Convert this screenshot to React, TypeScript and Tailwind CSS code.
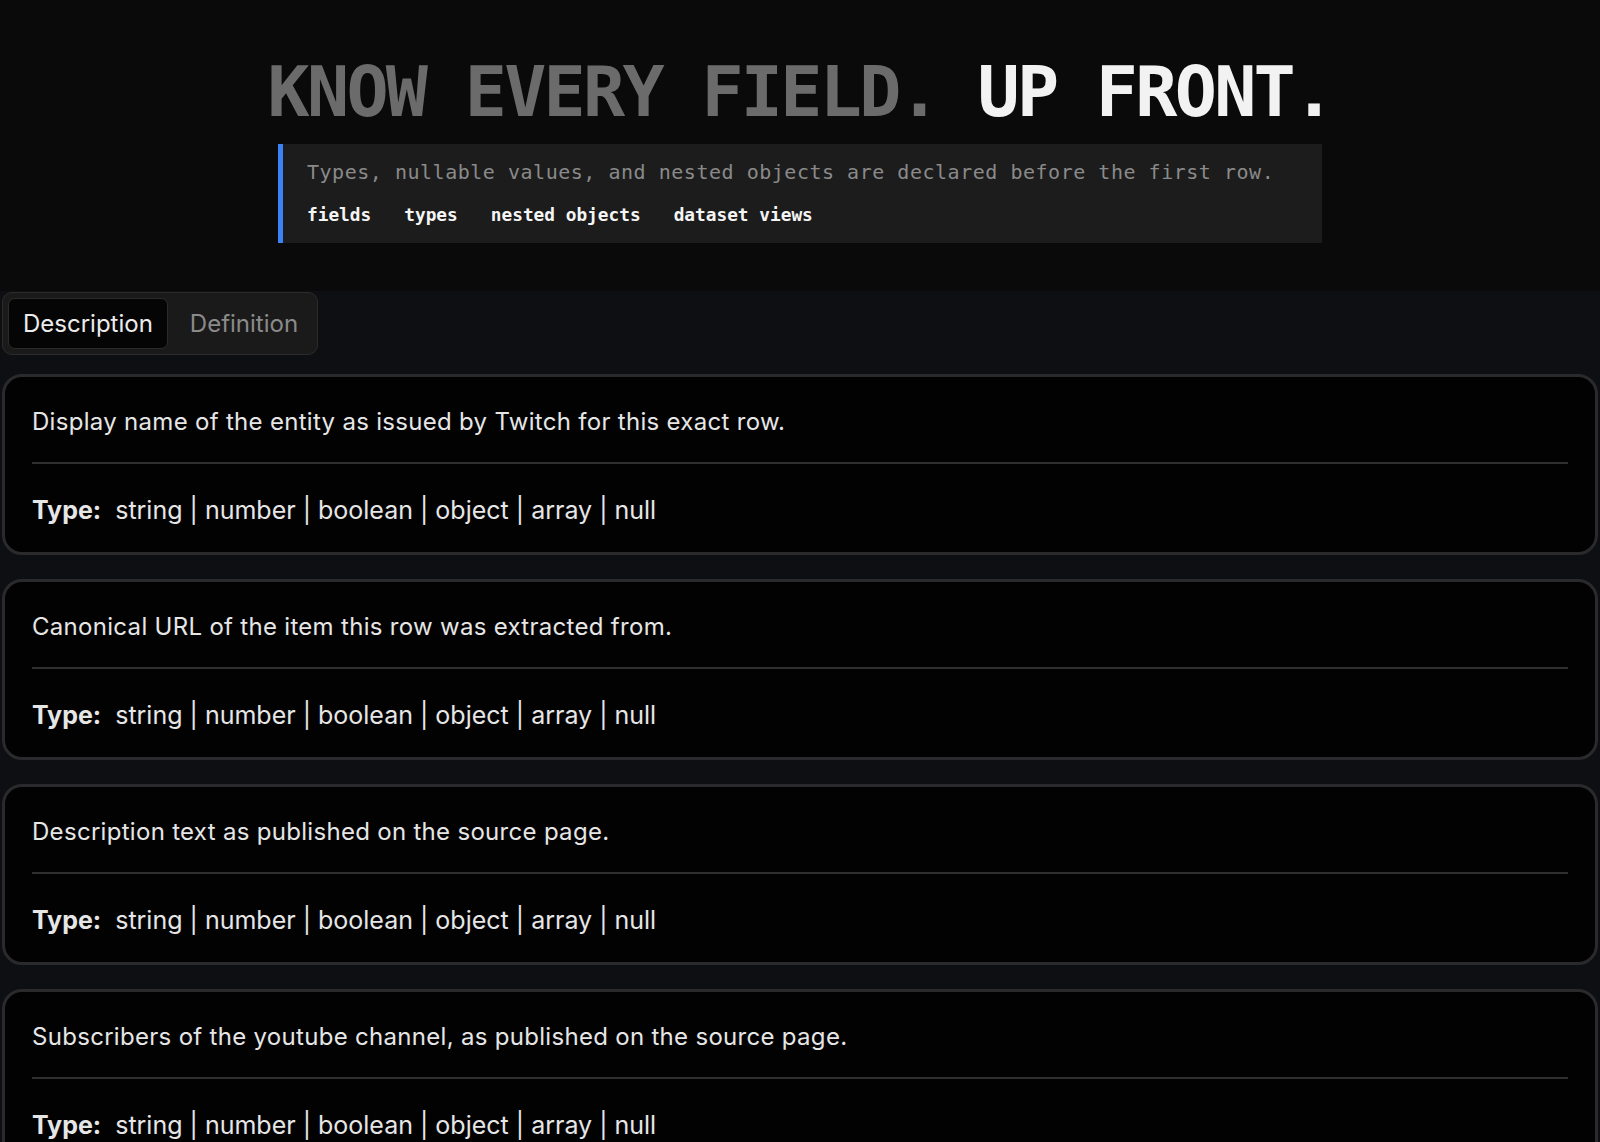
import React from 'react';

const fields = [
  'Display name of the entity as issued by Twitch for this exact row.',
  'Canonical URL of the item this row was extracted from.',
  'Description text as published on the source page.',
  'Subscribers of the youtube channel, as published on the source page.',
];

const tags = ['fields', 'types', 'nested objects', 'dataset views'];

const mono = "font-['DejaVu_Sans_Mono','Liberation_Mono',monospace]";

export default function App() {
  return (
    <div className="min-h-screen bg-[#0e0f12] font-['Inter','Noto_Sans',sans-serif]">
      {/* Hero */}
      <header className="bg-[#0a0a0a] pt-[57px] pb-[48px]">
        <h1 className={`${mono} text-center text-[70px] leading-none font-bold tracking-[-2.7px] whitespace-nowrap`}>
          <span className="text-[#6b6b6b]">KNOW EVERY FIELD.</span>{' '}
          <span className="text-[#f2f2f2]">UP FRONT.</span>
        </h1>
        <div className="mx-auto mt-[17px] w-[1044px] border-l-[5px] border-[#3b82f6] bg-[#1c1c1c] pl-6 pt-[14px] pb-[16px]">
          <p className={`${mono} text-[20px] leading-7 tracking-[0.52px] text-[#8a8a8a]`}>
            Types, nullable values, and nested objects are declared before the first row.
          </p>
          <div className={`${mono} mt-[17px] flex gap-[33px] text-[17.8px] leading-6 font-bold text-[#f5f5f5]`}>
            {tags.map((t) => (
              <span key={t}>{t}</span>
            ))}
          </div>
        </div>
      </header>

      {/* Fields */}
      <section className="px-[2px] pt-[1px]">
        <div className="inline-flex gap-2 rounded-[10px] border border-[#2b2b2b] bg-[#1a1a1a] p-[5px]">
          <button className="h-[51px] rounded-[7px] border border-[#2b2b2b] bg-[#050505] px-[14px] text-2xl text-[#ececec]">
            Description
          </button>
          <button className="h-[51px] px-[14px] text-2xl text-[#8a8a8a]">Definition</button>
        </div>

        <div className="mt-[19px] space-y-6 pb-6">
          {fields.map((f) => (
            <div key={f} className="rounded-[20px] border-[3px] border-[#2a2a2c] bg-[#020202] px-[27px] pt-[29px] pb-[26px]">
              <p className="text-2xl leading-8 tracking-[0.3px] text-[#e6e6e6]">{f}</p>
              <div className="mt-6 h-[2px] bg-[#2f2f2f]" />
              <p className="mt-[30px] text-[25px] leading-8 text-[#e6e6e6]">
                <span className="mr-[14px] font-bold">Type:</span>
                string | number | boolean | object | array | null
              </p>
            </div>
          ))}
        </div>
      </section>
    </div>
  );
}
